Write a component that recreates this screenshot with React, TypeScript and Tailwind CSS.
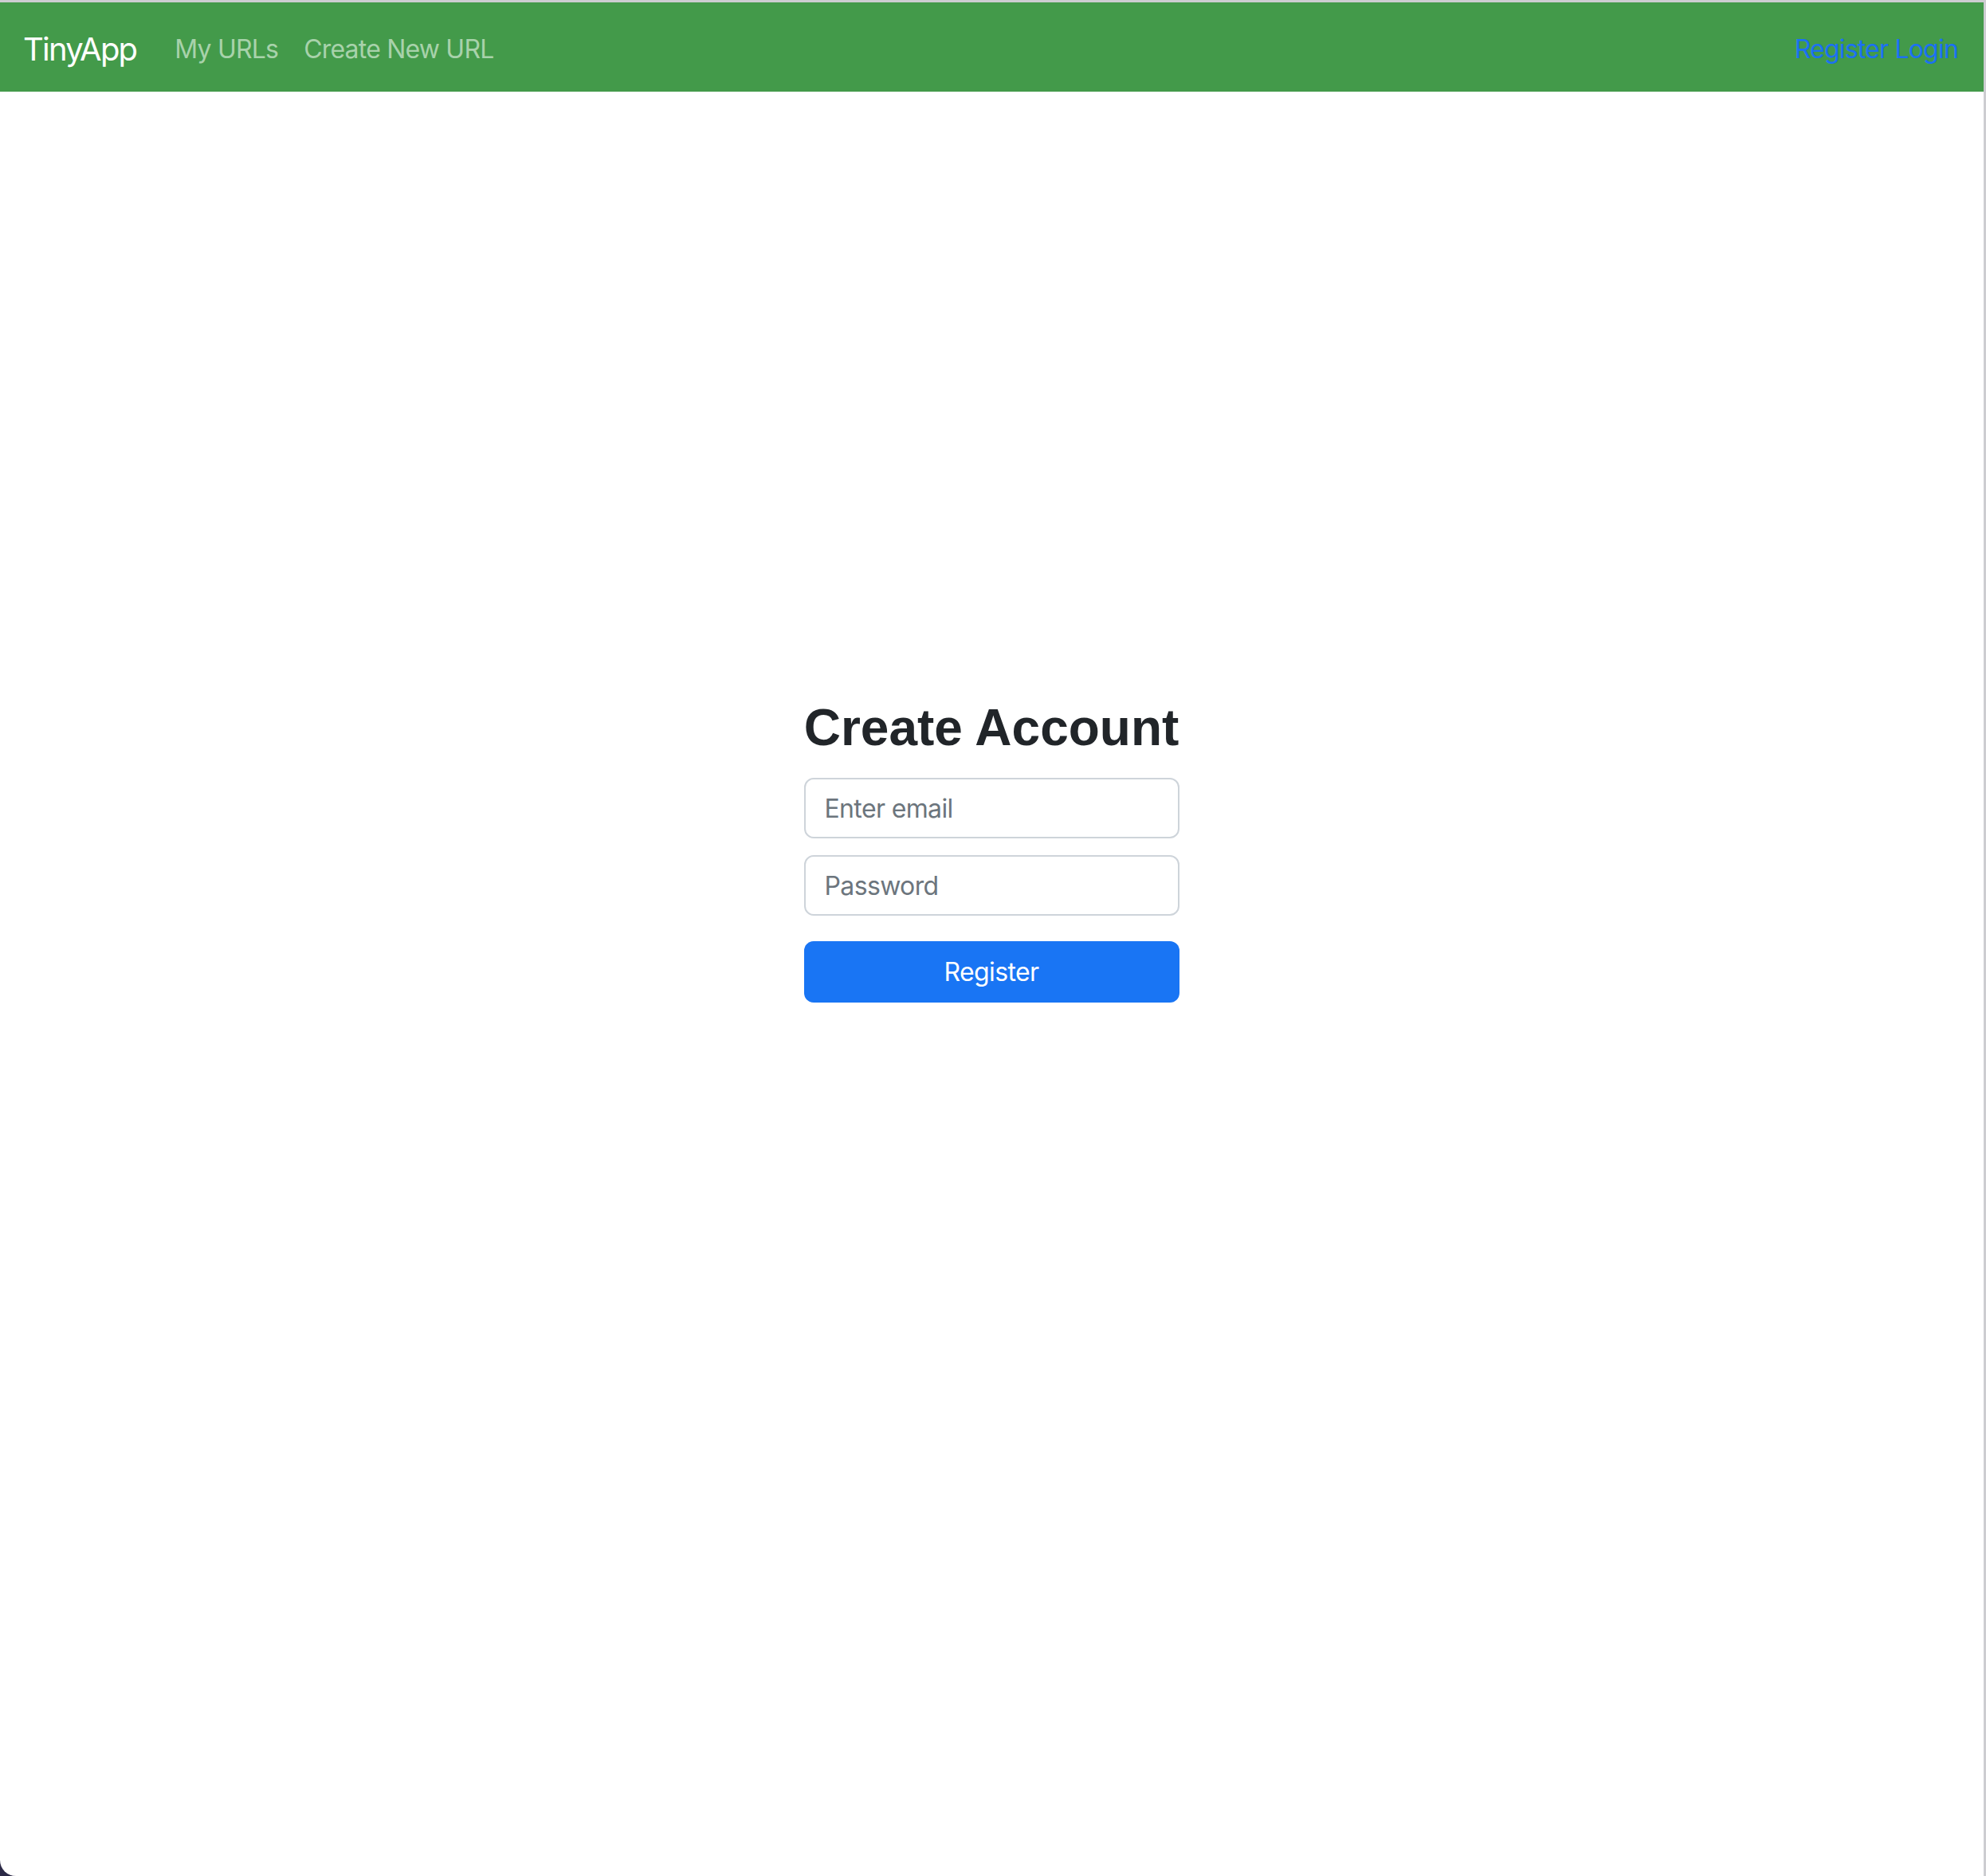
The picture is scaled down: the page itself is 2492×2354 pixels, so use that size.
const NavBar: React.FC = () => {
    return (
        <nav className="flex items-center justify-between h-[112px] shrink-0 bg-[#439a4a] pl-[29px] pr-[32px] pt-[6px] font-['Inter',sans-serif]">
            <div className="flex items-center">
                <a href="/" className="text-[40px] leading-[60px] tracking-[-0.045em] text-white mr-[32px]">TinyApp</a>
                <ul className="flex list-none flex-row items-center text-[32px] leading-[48px] tracking-[-0.025em] text-[#a8d2ab]">
                    <li>
                        <a href="/urls" className="px-[16px]">My URLs</a>
                    </li>
                    <li>
                        <a href="/urls/new" className="px-[16px]">Create New URL</a>
                    </li>
                </ul>
            </div>
            <div className="text-[32px] leading-[48px] tracking-[-0.025em] text-[#1b70f3]">
                <a href="/register">Register</a> <a href="/login">Login</a>
            </div>
        </nav>
    );
}

const RegisterForm: React.FC = () => {
    return (
        <form className="flex flex-col w-[471px]">
            <h2 className="text-center whitespace-nowrap text-[64px] leading-[77px] font-bold text-[#212529] mb-[24px] font-['Liberation_Sans',Arial,sans-serif]">
                Create Account
            </h2>
            <input
                type="email"
                placeholder="Enter email"
                className="h-[76px] px-[24px] border-2 border-[#ced4da] rounded-[12px] text-[32px] tracking-[-0.02em] text-[#212529] placeholder:text-[#6c757d] mb-[21px] outline-none"
            />
            <input
                type="password"
                placeholder="Password"
                className="h-[76px] px-[24px] border-2 border-[#ced4da] rounded-[12px] text-[32px] tracking-[-0.02em] text-[#212529] placeholder:text-[#6c757d] mb-[32px] outline-none"
            />
            <button type="button" className="h-[77px] rounded-[12px] bg-[#1975f4] text-white text-[32px] tracking-[-0.02em]">
                Register
            </button>
        </form>
    );
}

const App: React.FC = () => {
    return (
        <div className="h-screen w-full bg-[#2c2a47]">
            <div className="flex flex-col h-full bg-white border-t-[3px] border-r-[3px] border-[#cdcdd1] rounded-bl-[20px] overflow-hidden font-['Inter',sans-serif]">
                <NavBar />
                <main className="flex justify-center pt-[760px] pr-[1px]">
                    <RegisterForm />
                </main>
            </div>
        </div>
    );
}

export default App;
